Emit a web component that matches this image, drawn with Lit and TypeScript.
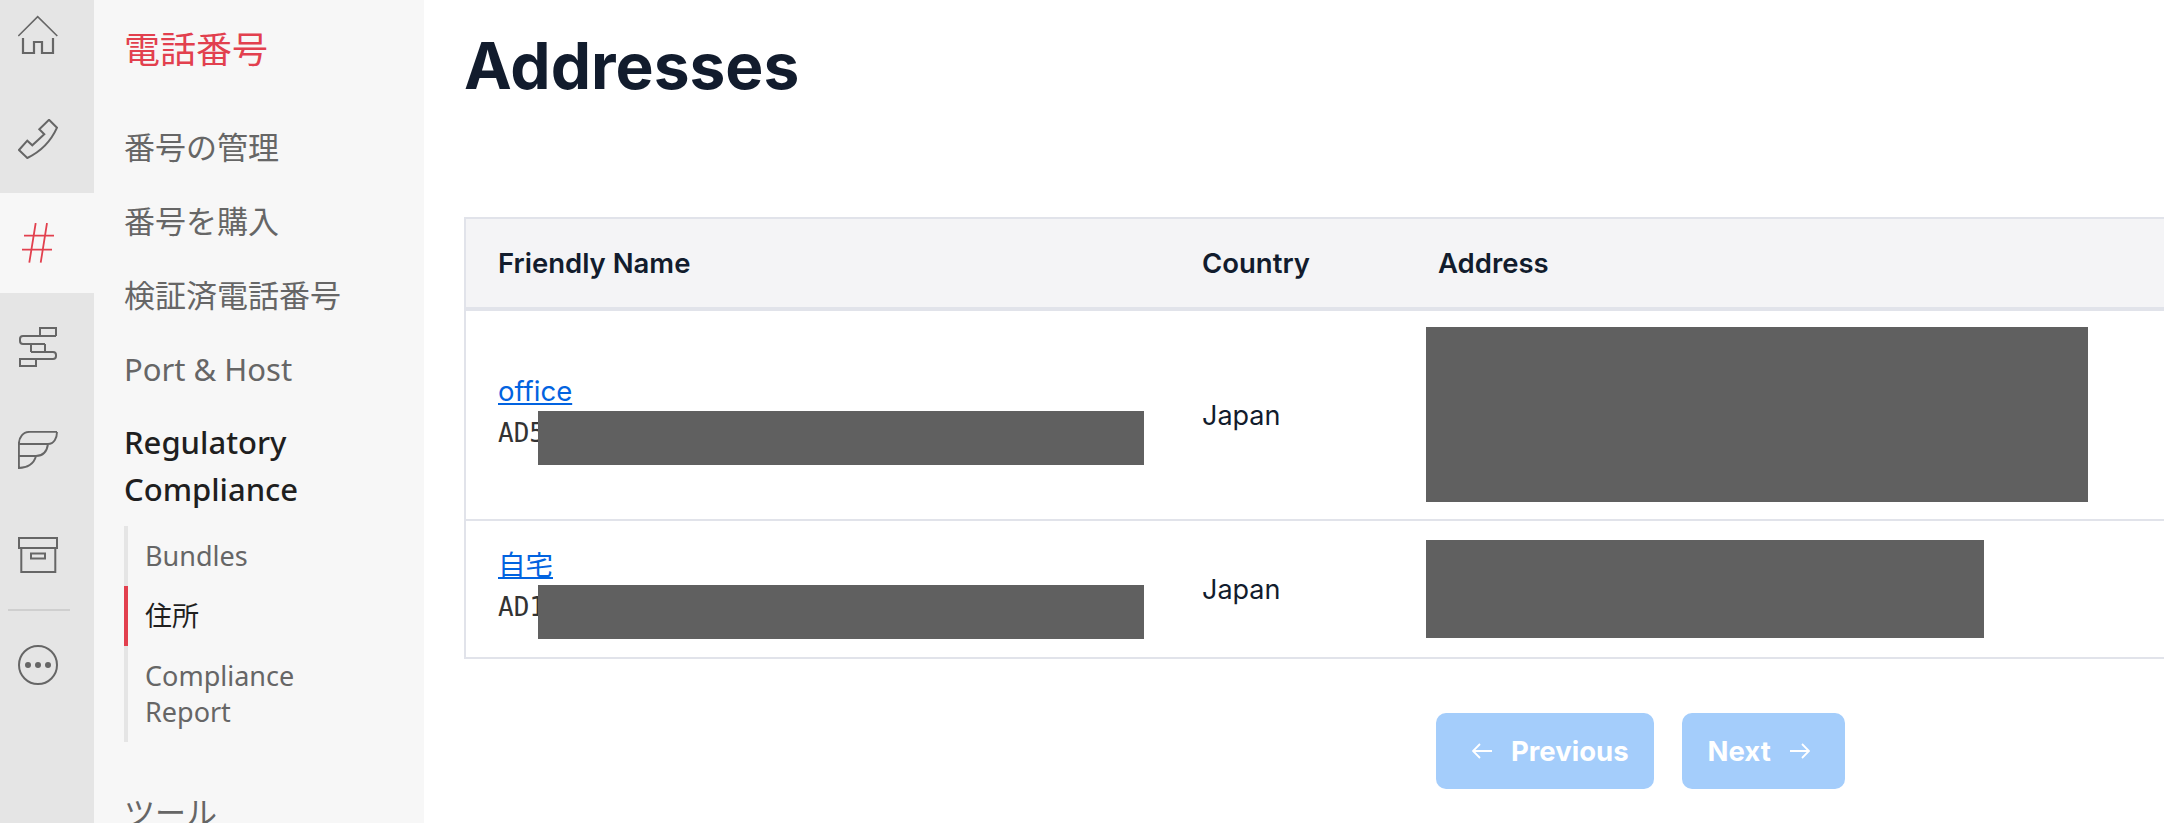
import { LitElement, html, css, svg } from "lit";
import { customElement } from "lit/decorators.js";

const icon = (body: unknown) => html`<svg class="ic" viewBox="0 0 40 40" width="40" height="40" fill="none" stroke="currentColor" stroke-width="2">${body}</svg>`;

const icons = [
  svg`<path stroke-width="1.6" d="M.3 21 19.7 1.7 39.3 21"/><path stroke-width="2.2" d="M5 23v15h11V27h8v11h11V23"/>`,
  svg`<path d="M31 .8 39 8.7C33 22 22 33 9.3 39L1 31l8.3-9.3 5 4.6 12-11-5-5z"/>`,
  svg`<path stroke-width="1.8" d="M6 12.7h30M4 26.7h30M17.7 0l-6.4 39.7M29 0l-6.3 39.7"/>`,
  svg`<path d="M22 9V1h16v8M38 9H5a3 3 0 0 0-3 3v2a3 3 0 0 0 3 3h22M13 17v8M27 17v8M13 25h22a3 3 0 0 1 3 3v1a3 3 0 0 1-3 3H2v7h16v-7"/>`,
  svg`<path stroke-width="1.9" d="M39 .9H12C5 .9 .9 6 .9 13v24C9 37 16 33 18 25H.9M18 25c8 0 11-5 12-12H.9M30 13c6 0 9-6 9-12"/>`,
  svg`<path d="M1 3h38v10H1zM3.300 13v24h34V13M13 18.500h14v5H13z"/>`,
];

const more = svg`<circle cx="20" cy="20" r="19"/><g fill="currentColor" stroke="none"><circle cx="10" cy="20" r="3"/><circle cx="20" cy="20" r="3"/><circle cx="30" cy="20" r="3"/></g>`;

const arrow = (d: string) => html`<svg class="arrow" viewBox="0 0 20 16" width="20" height="16" fill="none" stroke="currentColor" stroke-width="1.8"><path d=${d}/></svg>`;

@customElement("app-root")
export class AppRoot extends LitElement {
  static styles = css`
    :host {
      display: flex;
      width: 2164px;
      height: 823px;
      overflow: hidden;
      background: #fff;
      font-family: Inter, "Noto Sans CJK JP", sans-serif;
      color: #121c2d;
    }
    .rail {
      flex: none;
      width: 94px;
      background: #e5e5e5;
      display: flex;
      flex-direction: column;
      gap: 4px;
      margin-top: -15px;
      color: #666;
    }
    .rail-item {
      height: 100px;
      padding-left: 18px;
      display: flex;
      align-items: center;
    }
    .rail-item.active {
      background: #f7f7f7;
      color: #e2404e;
    }
    .rail-sep {
      height: 2px;
      width: 62px;
      margin-left: 8px;
      background: #cfcfcf;
    }
    .rail-item.last {
      margin-top: 0;
    }
    .side {
      flex: none;
      width: 330px;
      background: #f7f7f7;
      padding: 27px 0 0 30px;
      box-sizing: border-box;
      font-family: "Noto Sans", "Noto Sans CJK JP", sans-serif;
      color: #666;
    }
    .title {
      font-size: 36px;
      line-height: 46px;
      color: #e2404e;
      margin-bottom: 37px;
    }
    .nav {
      font-size: 31px;
      line-height: 46px;
      padding: 14px 0;
    }
    .nav.current {
      color: #1f1f1f;
      line-height: 47px;
      padding: 13px 0;
      width: 240px;
      font-weight: 500;
    }
    .nav.tools {
      margin-top: 33px;
    }
    .sub {
      border-left: 4px solid #e5e5e5;
      font-size: 27px;
      line-height: 36px;
      width: 200px;
    }
    .sub div {
      padding: 12px 0 12px 17px;
      margin-left: -4px;
      border-left: 4px solid transparent;
    }
    .sub .on {
      color: #1f1f1f;
      border-left-color: #e2404e;
    }
    .main {
      flex: 1;
      min-width: 0;
      padding-left: 40px;
      overflow: hidden;
    }
    h1 {
      margin: 28px 0 0;
      font-size: 64px;
      line-height: 76px;
      font-weight: 700;
      color: #121c2d;
    }
    .table {
      margin-top: 113px;
      width: 1800px;
      border: solid #e1e3ea;
      border-width: 2px;
      box-sizing: border-box;
      font-size: 27px;
    }
    .row {
      display: grid;
      grid-template-columns: 704px 235px 1fr;
      align-items: center;
      border-top: 2px solid #e1e3ea;
    }
    .row.head {
      height: 88px;
      background: #f4f4f6;
      border-top: 0;
      border-bottom: 4px solid #e1e3ea;
      font-weight: 600;
      font-size: 27.5px;
    }
    .row.head + .row {
      border-top: 0;
    }
    .c {
      padding-left: 32px;
    }
    .addr {
      padding-left: 21px;
    }
    .addr.first {
      padding-top: 16px;
      padding-bottom: 17px;
    }
    .head .addr {
      padding-left: 33px;
    }
    .name {
      padding-bottom: 6px;
    }
    .name.second {
      padding-top: 23px;
      padding-bottom: 29px;
    }
    .name a {
      display: inline-block;
      color: #0263e0;
      text-decoration: underline;
      line-height: 42px;
      font-size: 27.5px;
    }
    .id {
      position: relative;
      font-family: "DejaVu Sans Mono", monospace;
      font-size: 26px;
      line-height: 42px;
      color: #333;
    }
    .mask {
      position: absolute;
      left: 40px;
      top: -1px;
      width: 606px;
      height: 54px;
      background: #606060;
    }
    .block {
      background: #606060;
    }
    .pager {
      display: flex;
      gap: 28px;
      margin-top: 54px;
      margin-left: 972px;
    }
    .btn {
      height: 76px;
      border-radius: 10px;
      background: #a4cdfb;
      color: #fff;
      display: flex;
      align-items: center;
      gap: 19px;
      font-size: 27.5px;
      font-weight: 700;
    }
    .btn.prev {
      padding: 0 25px 0 36px;
    }
    .btn.next {
      padding: 0 35px 0 26px;
    }
  `;

  private addrBlock(w: number, h: number) {
    return html`<div class="block" style="width:${w}px;height:${h}px"></div>`;
  }

  render() {
    return html`
      <nav class="rail">
        ${icons.map((b, i) => html`<div class="rail-item ${i === 2 ? "active" : ""}">${icon(b)}</div>`)}
        <div class="rail-sep"></div>
        <div class="rail-item last">${icon(more)}</div>
      </nav>
      <aside class="side">
        <div class="title">電話番号</div>
        <div class="nav">番号の管理</div>
        <div class="nav">番号を購入</div>
        <div class="nav">検証済電話番号</div>
        <div class="nav">Port &amp; Host</div>
        <div class="nav current">Regulatory Compliance</div>
        <div class="sub">
          <div>Bundles</div>
          <div class="on">住所</div>
          <div>Compliance Report</div>
        </div>
        <div class="nav tools">ツール</div>
      </aside>
      <main class="main">
        <h1>Addresses</h1>
        <div class="table">
          <div class="row head">
            <div class="c">Friendly Name</div>
            <div class="c">Country</div>
            <div class="c addr">Address</div>
          </div>
          <div class="row">
            <div class="c name"><a>office</a><div class="id">AD5<span class="mask"></span></div></div>
            <div class="c">Japan</div>
            <div class="c addr first">${this.addrBlock(662, 175)}</div>
          </div>
          <div class="row">
            <div class="c name second"><a>自宅</a><div class="id">AD1<span class="mask"></span></div></div>
            <div class="c">Japan</div>
            <div class="c addr">${this.addrBlock(558, 98)}</div>
          </div>
        </div>
        <div class="pager">
          <div class="btn prev">${arrow("M20 8H1M8 1 1 8l7 7")}Previous</div>
          <div class="btn next">Next${arrow("M0 8h19M12 1l7 7-7 7")}</div>
        </div>
      </main>
    `;
  }
}
